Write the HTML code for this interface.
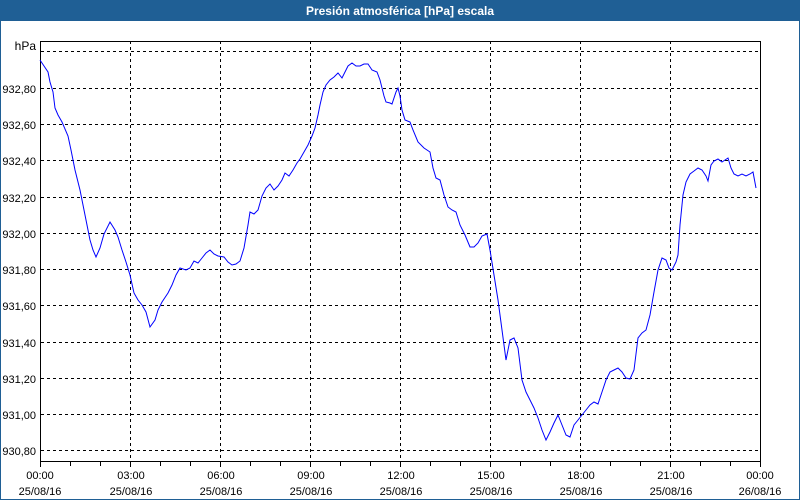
<!DOCTYPE html>
<html><head><meta charset="utf-8"><style>
html,body{margin:0;padding:0;background:#fff}
body{width:800px;height:500px;overflow:hidden;position:relative}
svg{position:absolute;left:0;top:0}
text{font-family:"Liberation Sans",sans-serif;font-size:11px;fill:#000}
</style></head><body>
<svg width="800" height="500" viewBox="0 0 800 500">
<rect x="0.5" y="0.5" width="799" height="499" fill="#fff" stroke="#1f5f95"/>
<rect x="0" y="0" width="800" height="21" fill="#1f5f95"/>
<text x="400" y="15" text-anchor="middle" style="font-weight:bold;fill:#fff;font-size:12px">Presión atmosférica [hPa] escala</text>
<g stroke="#000" stroke-dasharray="3,3" stroke-width="1">
<line x1="41" x2="761" y1="51.5" y2="51.5"/><line x1="41" x2="761" y1="88.5" y2="88.5"/><line x1="41" x2="761" y1="124.5" y2="124.5"/><line x1="41" x2="761" y1="160.5" y2="160.5"/><line x1="41" x2="761" y1="197.5" y2="197.5"/><line x1="41" x2="761" y1="233.5" y2="233.5"/><line x1="41" x2="761" y1="269.5" y2="269.5"/><line x1="41" x2="761" y1="305.5" y2="305.5"/><line x1="41" x2="761" y1="342.5" y2="342.5"/><line x1="41" x2="761" y1="378.5" y2="378.5"/><line x1="41" x2="761" y1="414.5" y2="414.5"/><line x1="41" x2="761" y1="450.5" y2="450.5"/>
<line x1="130.5" x2="130.5" y1="41" y2="462"/><line x1="220.5" x2="220.5" y1="41" y2="462"/><line x1="310.5" x2="310.5" y1="41" y2="462"/><line x1="400.5" x2="400.5" y1="41" y2="462"/><line x1="490.5" x2="490.5" y1="41" y2="462"/><line x1="580.5" x2="580.5" y1="41" y2="462"/><line x1="670.5" x2="670.5" y1="41" y2="462"/>
</g>
<rect x="40.5" y="41.5" width="720" height="420" fill="none" stroke="#000"/>
<g stroke="#000">
<path d="M40.5 462v5M70.5 462v4M100.5 462v4M130.5 462v5M160.5 462v4M190.5 462v4M220.5 462v5M250.5 462v4M280.5 462v4M310.5 462v5M340.5 462v4M370.5 462v4M400.5 462v5M430.5 462v4M460.5 462v4M490.5 462v5M520.5 462v4M550.5 462v4M580.5 462v5M610.5 462v4M640.5 462v4M670.5 462v5M700.5 462v4M730.5 462v4M760.5 462v5"/>
</g>
<polyline fill="none" stroke="#0000ff" stroke-width="1" points="40,60 44,66 48,72 50,82 53,92 55,108 58,115 62,122 68,136 71,150 75,170 80,190 85,215 90,240 93,250 96,257 100,248 104,234 110,222 115,230 118,237 122,250 126,262 130,275 134,293 138,300 142,305 146,312 150,327 155,320 158,310 162,302 168,293 172,285 176,275 180,268 186,270 190,268 194,261 198,263 202,258 206,253 210,250 214,254 218,256 224,257 228,262 232,265 236,264 240,261 244,248 248,225 250,212 254,214 258,210 262,196 266,188 270,184 274,190 278,186 282,180 285,173 289,176 293,170 297,163 300,159 304,152 308,145 312,136 315,128 318,115 320,105 323,92 326,85 330,80 334,77 338,73 342,78 345,72 348,66 352,63 356,66 360,66 364,64 368,64 372,70 377,72 380,80 384,96 386,102 390,103 392,104 396,92 398,88 400,96 402,110 405,120 410,122 413,130 418,142 424,148 430,152 433,168 436,178 440,180 444,195 448,207 452,210 456,212 460,225 465,235 470,247 474,247 478,243 482,236 487,234 490,250 494,275 498,300 502,330 506,360 510,340 514,338 518,348 522,380 526,392 530,400 534,408 538,418 542,430 546,440 550,432 554,423 558,415 562,425 566,435 570,437 574,425 578,420 582,415 586,410 590,405 594,402 598,404 602,392 606,380 610,372 614,370 618,368 622,372 626,378 630,379 634,370 638,338 642,333 646,330 650,315 654,292 658,270 662,258 666,260 669,268 672,270 676,262 678,255 680,225 683,195 686,182 690,174 694,171 698,168 702,170 706,176 708,181 711,165 714,161 718,159 722,162 725,160 728,158 731,168 734,174 738,176 742,174 746,176 750,174 753,172 756,188"/>
<g text-anchor="end">
<text x="36" y="50" style="font-size:12px">hPa</text>
<text x="36" y="93">932,80</text><text x="36" y="129">932,60</text><text x="36" y="165">932,40</text><text x="36" y="202">932,20</text><text x="36" y="238">932,00</text><text x="36" y="274">931,80</text><text x="36" y="310">931,60</text><text x="36" y="347">931,40</text><text x="36" y="383">931,20</text><text x="36" y="419">931,00</text><text x="36" y="455">930,80</text>
</g>
<g text-anchor="middle">
<text x="40" y="479">00:00</text><text x="40" y="495">25/08/16</text>
<text x="131" y="479">03:00</text><text x="131" y="495">25/08/16</text>
<text x="221" y="479">06:00</text><text x="221" y="495">25/08/16</text>
<text x="311" y="479">09:00</text><text x="311" y="495">25/08/16</text>
<text x="401" y="479">12:00</text><text x="401" y="495">25/08/16</text>
<text x="491" y="479">15:00</text><text x="491" y="495">25/08/16</text>
<text x="581" y="479">18:00</text><text x="581" y="495">25/08/16</text>
<text x="671" y="479">21:00</text><text x="671" y="495">25/08/16</text>
<text x="760" y="479">00:00</text><text x="760" y="495">26/08/16</text>
</g>
</svg>
</body></html>
